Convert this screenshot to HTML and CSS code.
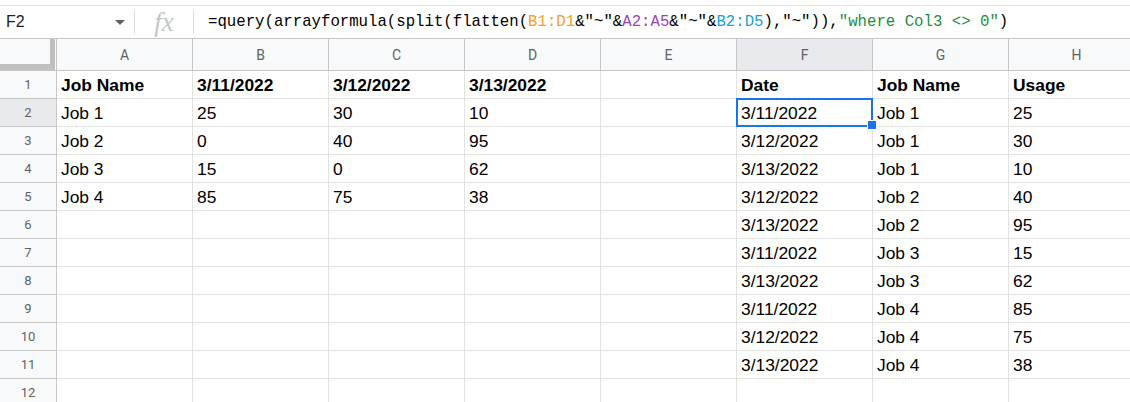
FILE: index.html
```html
<!DOCTYPE html>
<html lang="en">
<head>
  <meta charset="UTF-8">
  <title>Job usage sheet</title>
  <link rel="stylesheet" href="styles.css">
</head>
<body>
  <div class="formula-bar">
    <div class="name-box">
      <span>F2</span>
      <span class="caret"></span>
    </div>
    <span class="divider"></span>
    <div class="fx">fx</div>
    <span class="divider"></span>
    <div class="formula">=query(arrayformula(split(flatten(<span class="ref-orange">B1:D1</span>&amp;"~"&amp;<span class="ref-purple">A2:A5</span>&amp;"~"&amp;<span class="ref-cyan">B2:D5</span>),"~")),<span class="str">"where Col3 &lt;&gt; 0"</span>)</div>
  </div>

  <div class="grid" id="grid"></div>

  <script>
    const grid = document.getElementById("grid");
    const letters = ["A", "B", "C", "D", "E", "F", "G", "H"];

    const rows = [
      ["Job Name", "3/11/2022", "3/12/2022", "3/13/2022", "", "Date", "Job Name", "Usage"],
      ["Job 1", "25", "30", "10", "", "3/11/2022", "Job 1", "25"],
      ["Job 2", "0", "40", "95", "", "3/12/2022", "Job 1", "30"],
      ["Job 3", "15", "0", "62", "", "3/13/2022", "Job 1", "10"],
      ["Job 4", "85", "75", "38", "", "3/12/2022", "Job 2", "40"],
      ["", "", "", "", "", "3/13/2022", "Job 2", "95"],
      ["", "", "", "", "", "3/11/2022", "Job 3", "15"],
      ["", "", "", "", "", "3/13/2022", "Job 3", "62"],
      ["", "", "", "", "", "3/11/2022", "Job 4", "85"],
      ["", "", "", "", "", "3/12/2022", "Job 4", "75"],
      ["", "", "", "", "", "3/13/2022", "Job 4", "38"],
      ["", "", "", "", "", "", "", ""]
    ];

    let html = `<div class="corner"><div class="freeze"></div></div>`;
    html += letters.map(l => `<div class="col-head${l === "F" ? " active" : ""}">${l}</div>`).join("");

    rows.forEach((row, r) => {
      html += `<div class="row-head${r === 1 ? " active" : ""}">${r + 1}</div>`;
      html += row.map((value, c) => {
        let cls = "cell";
        if (r === 0) cls += " bold";
        if (r === 1 && c === 5) cls += " selected";
        return `<div class="${cls}">${value}</div>`;
      }).join("");
    });

    grid.innerHTML = html;
  </script>
</body>
</html>
```

FILE: styles.css
```css
body {
  margin: 0;
  width: 1130px;
  height: 402px;
  overflow: hidden;
  background: #fff;
  font-family: "Liberation Sans", Arial, sans-serif;
}

/* formula bar */
.formula-bar {
  display: flex;
  align-items: center;
  margin-top: 5px;
  height: 32px;
  border-top: 1px solid #e1e3e6;
  border-bottom: 1px solid #c7c7c7;
}
.name-box {
  width: 134px;
  box-sizing: border-box;
  display: flex;
  align-items: center;
  justify-content: space-between;
  padding: 0 9px 0 6px;
  font-size: 16px;
  color: #202124;
}
.caret {
  width: 0;
  height: 0;
  border-left: 5px solid transparent;
  border-right: 5px solid transparent;
  border-top: 5px solid #5f6368;
}
.divider {
  width: 1px;
  height: 24px;
  background: #dadce0;
}
.fx {
  width: 58px;
  text-align: center;
  font-family: "Liberation Serif", serif;
  font-style: italic;
  font-size: 27px;
  line-height: 30px;
  color: #c4c7ca;
}
.formula {
  padding-left: 14px;
  font-family: "Liberation Mono", monospace;
  font-size: 15.7px;
  color: #000;
  white-space: pre;
}
.ref-orange { color: #f6a02a; }
.ref-purple { color: #9b45b2; }
.ref-cyan { color: #1aa3d1; }
.str { color: #1e8e3e; }

/* sheet grid */
.grid {
  display: grid;
  grid-template-columns: 57px repeat(8, 136px);
  grid-template-rows: 32px;
  grid-auto-rows: 28px;
}
.grid > div {
  box-sizing: border-box;
  border-right: 1px solid #e2e2e2;
  border-bottom: 1px solid #e2e2e2;
}
.grid > .corner,
.grid > .col-head,
.grid > .row-head {
  background: #f8f9fa;
  border-color: #c7c7c7;
  font-family: Roboto, "Liberation Sans", sans-serif;
  color: #5f6368;
}
.grid > .active {
  background: #e8eaed;
}
.freeze {
  width: 55px;
  height: 31px;
  box-sizing: border-box;
  border-right: 5px solid #c0c0c0;
  border-bottom: 6px solid #c0c0c0;
}
.col-head {
  display: flex;
  align-items: center;
  justify-content: center;
  font-size: 14px;
  padding-top: 1px;
}
.row-head {
  display: flex;
  align-items: center;
  justify-content: center;
  font-size: 13px;
}
.cell {
  padding: 1px 4px 0;
  font-size: 17.4px;
  line-height: 26px;
  color: #000;
  white-space: nowrap;
}
.bold {
  font-weight: bold;
}
.selected {
  position: relative;
}
.selected::before {
  content: "";
  position: absolute;
  left: -1px;
  top: -1px;
  right: -1px;
  bottom: -1px;
  border: 2px solid #1a73e8;
  z-index: 2;
}
.selected::after {
  content: "";
  position: absolute;
  right: -5px;
  bottom: -4px;
  width: 8px;
  height: 8px;
  background: #1a73e8;
  border: 1px solid #fff;
  z-index: 3;
}
```
